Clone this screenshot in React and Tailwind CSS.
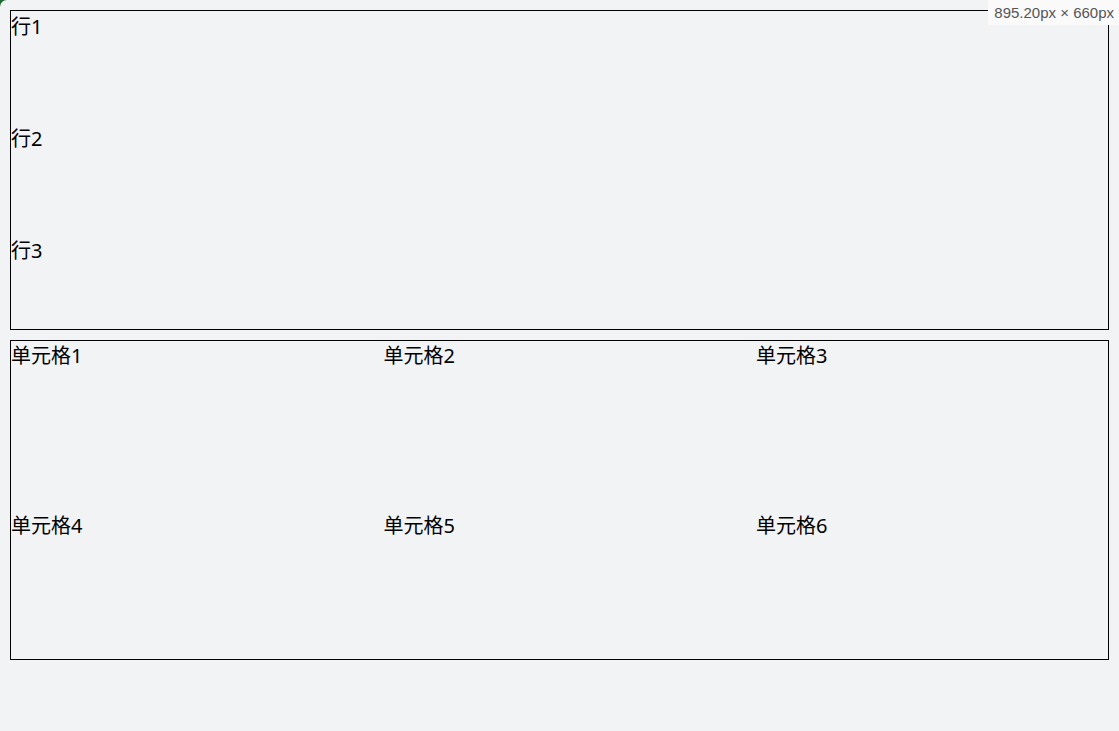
import React from "react";

const rows = ["行1", "行2", "行3"];
const cells = ["单元格1", "单元格2", "单元格3", "单元格4", "单元格5", "单元格6"];

const App = () => {
  return (
    <div className="w-[1119px] h-[731px] bg-[#1e6b35] overflow-hidden">
      <div
        className="relative w-full h-full bg-[#f2f3f5] rounded-t-[7px] pt-[10px] px-[10px] text-black text-[20px] leading-[23px]"
        style={{ fontFamily: '"Noto Sans", "Noto Sans CJK SC", sans-serif' }}
      >
        <div className="h-[320px] border border-black grid grid-rows-[94px_94px_94px] gap-y-[18px] pt-[4px]">
          {rows.map((r) => (
            <div key={r}>{r}</div>
          ))}
        </div>

        <div className="mt-[10px] h-[320px] border border-black grid grid-cols-[352px_352px_352px] grid-rows-[148px_148px] gap-x-[20.5px] gap-y-[22px] pt-[3px]">
          {cells.map((c) => (
            <div key={c}>{c}</div>
          ))}
        </div>

        <div
          className="absolute top-0 right-0 h-[25px] pl-[6px] pr-[5px] bg-[#fafafa] text-[#555] text-[15px] leading-[25px]"
          style={{ fontFamily: '"Liberation Sans", Arial, sans-serif' }}
        >
          895.20px × 660px
        </div>
      </div>
    </div>
  );
};

export default App;
